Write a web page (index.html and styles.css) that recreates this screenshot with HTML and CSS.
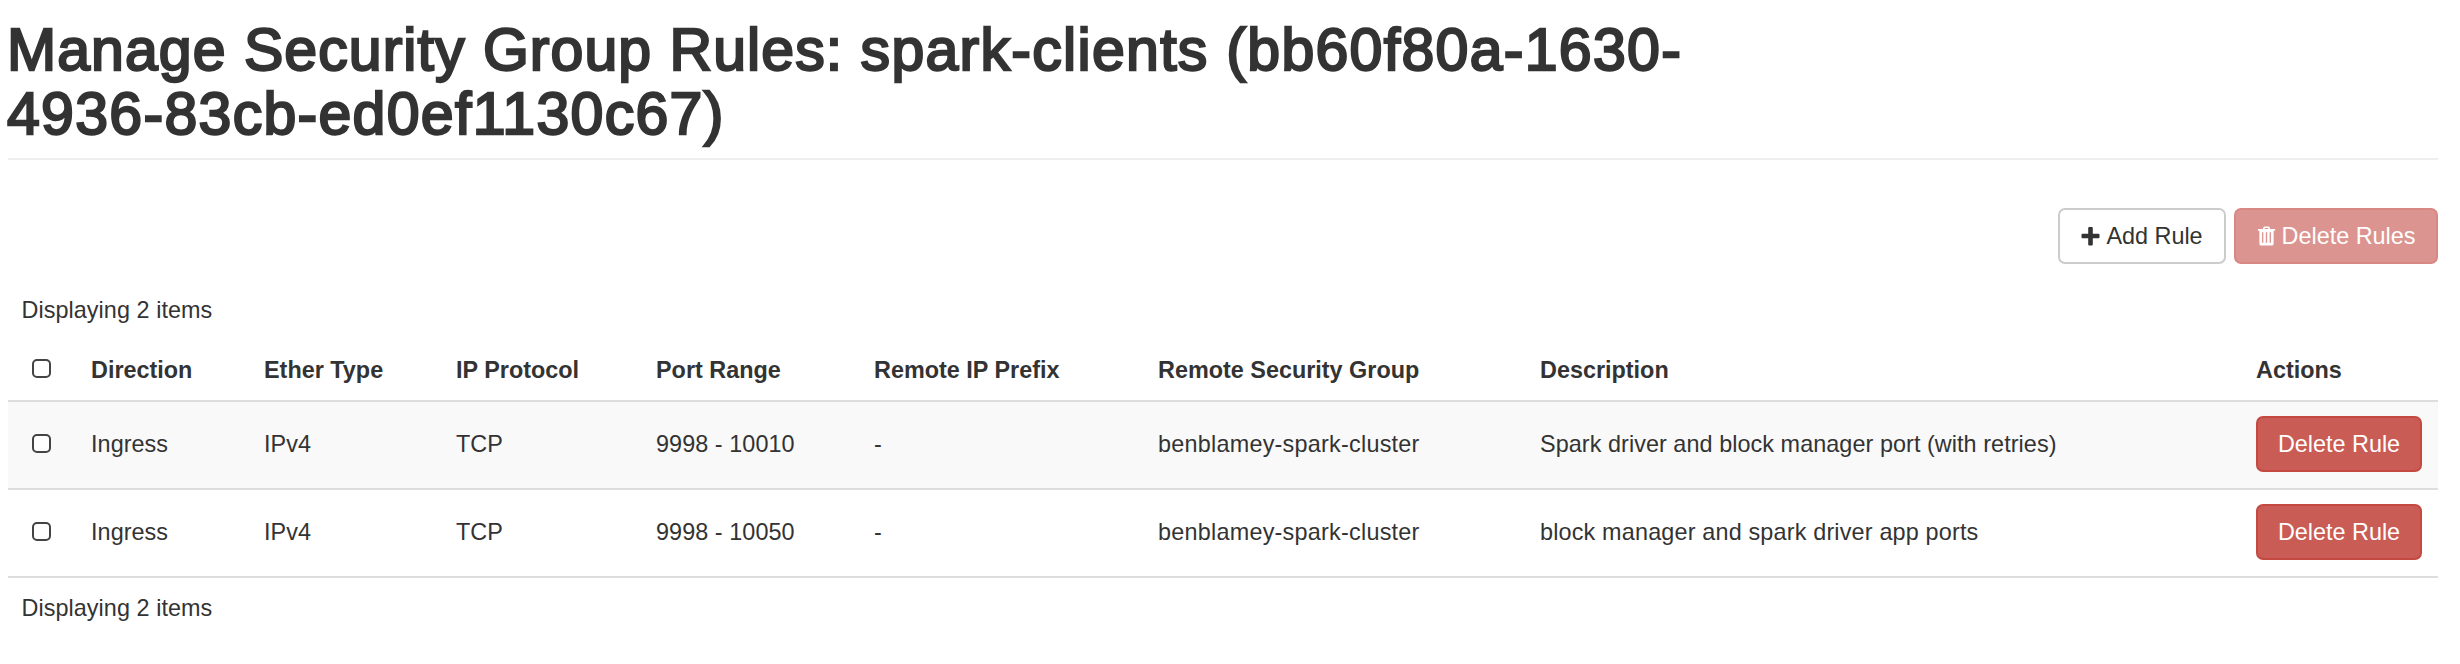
FILE: index.html
```html
<!DOCTYPE html>
<html lang="en">
<head>
<meta charset="utf-8">
<title>Manage Security Group Rules</title>
<link rel="stylesheet" href="styles.css">
</head>
<body>
<header class="page-header">
<h1>Manage Security Group Rules: <span class="group-id">spark-clients (bb60f80a-1630-<br>4936-83cb-ed0ef1130c67)</span></h1>
</header>
<div class="toolbar">
<button class="btn btn-default"><svg class="icon" viewBox="0 0 19 21"><path d="M7.200 2q0-1 1-1h2.600q1 0 1 1v5.700H17.500q1 0 1 1v2.600q0 1-1 1h-5.700V18.500q0 1-1 1H8.200q-1 0-1-1v-6.200H1.500q-1 0-1-1V8.700q0-1 1-1h5.700z"/></svg><span>Add Rule</span></button>
<button class="btn btn-danger" disabled><svg class="icon" viewBox="0 0 20 22"><path fill-rule="evenodd" d="M6 3 6.800 1.200Q7.200.5 8 .5h4q.8 0 1.200.7L14 3h5v2h-1.500v13.500q0 2-2 2h-11q-2 0-2-2V5H1V3zM8 3h4l-.5-1h-3zM5.300 6.500v11h1.400v-11zM9.300 6.500v11h1.400v-11zM13.300 6.500v11h1.400v-11z"/></svg><span>Delete Rules</span></button>
</div>
<p class="count">Displaying 2 items</p>
<table class="rules">
<colgroup><col class="c-check"><col class="c-dir"><col class="c-ether"><col class="c-proto"><col class="c-port"><col class="c-prefix"><col class="c-group"><col class="c-desc"><col class="c-act"></colgroup>
<thead><tr><th class="check"><input type="checkbox"></th><th>Direction</th><th>Ether Type</th><th>IP Protocol</th><th>Port Range</th><th>Remote IP Prefix</th><th>Remote Security Group</th><th>Description</th><th>Actions</th></tr></thead>
<tbody>
<tr><td class="check"><input type="checkbox"></td><td>Ingress</td><td>IPv4</td><td>TCP</td><td>9998 - 10010</td><td>-</td><td class="group">benblamey-spark-cluster</td><td>Spark driver and block manager port (with retries)</td><td><button class="btn btn-danger">Delete Rule</button></td></tr>
<tr><td class="check"><input type="checkbox"></td><td>Ingress</td><td>IPv4</td><td>TCP</td><td>9998 - 10050</td><td>-</td><td class="group">benblamey-spark-cluster</td><td class="ports">block manager and spark driver app ports</td><td><button class="btn btn-danger">Delete Rule</button></td></tr>
</tbody>
</table>
<p class="count count-bottom">Displaying 2 items</p>
</body>
</html>
```
FILE: styles.css
```css
* { box-sizing: border-box; }
body {
  margin: 0;
  padding: 0 22px 0 8px;
  background: #fff;
  color: #333;
  font: 23.4px/34px "Liberation Sans", Arial, sans-serif;
  letter-spacing: .06px;
}
.page-header {
  height: 160px;
  padding-top: 18px;
  border-bottom: 2px solid #eee;
}
h1 {
  margin: 0 0 0 -1px;
  font-size: 59px;
  font-weight: 400;
  line-height: 64.4px;
  letter-spacing: 1.05px;
  -webkit-text-stroke: 2.3px #333;
}
.group-id { letter-spacing: 1.3px; }
.toolbar {
  display: flex;
  justify-content: flex-end;
  gap: 8px;
  padding-top: 48px;
}
.btn {
  display: flex;
  align-items: center;
  justify-content: center;
  gap: 6px;
  height: 56px;
  padding: 0;
  border: 2px solid #ccc;
  border-radius: 7px;
  background: #fff;
  color: #333;
  font: inherit;
  white-space: nowrap;
}
.btn-default { width: 168px; }
.btn-danger {
  width: 166px;
  border-color: #c44a41;
  background: #c95c54;
  color: #fff;
}
.btn-danger:disabled { width: 204px; opacity: .65; }
.icon { width: 19px; height: 21px; fill: currentColor; }
.count { margin: 29px 0 0 13.5px; }
.rules {
  width: 2430px;
  margin-top: 13px;
  table-layout: fixed;
  border-collapse: separate;
  border-spacing: 0;
}
th, td {
  padding: 0 0 0 14px;
  border-bottom: 2px solid #ddd;
  text-align: left;
  vertical-align: middle;
}
th { height: 62px; letter-spacing: 0; }
td { height: 88px; padding-bottom: 2px; }
tbody tr:first-child { background: #f9f9f9; }
.check { padding-left: 24px; padding-bottom: 3px; }
td.check { padding-bottom: 4px; }
.group { letter-spacing: .24px; }
.ports { letter-spacing: .17px; }
input {
  display: block;
  appearance: none;
  width: 19px;
  height: 19px;
  margin: 0;
  border: 2px solid #444;
  border-radius: 5px;
  background: #fff;
}
.c-check { width: 69px; }
.c-dir { width: 173px; }
.c-ether { width: 192px; }
.c-proto { width: 200px; }
.c-port { width: 218px; }
.c-prefix { width: 284px; }
.c-group { width: 382px; }
.c-desc { width: 716px; }
.c-act { width: 196px; }
.count-bottom { margin-top: 13px; }
```
